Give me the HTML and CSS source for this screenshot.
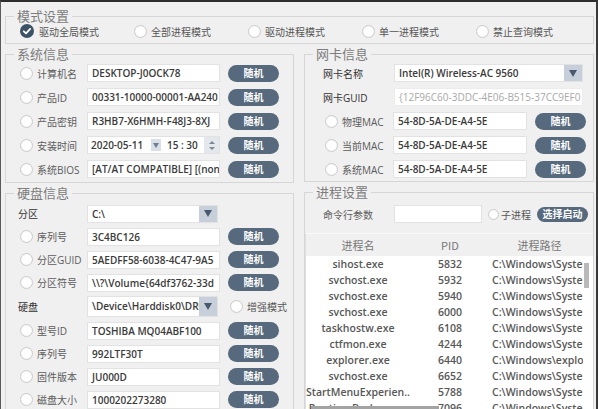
FILE: index.html
```html
<!DOCTYPE html>
<html>
<head>
  <meta charset="UTF-8">
  <title>模式设置</title>
  <link rel="stylesheet" href="styles.css">
</head>
<body>
  <div class="win">
    <fieldset class="group mode">
      <legend>模式设置</legend>
      <div class="mode-row">
        <div class="opt">
          <svg class="check" width="14" height="14" viewBox="0 0 14 14"><circle cx="7" cy="7" r="7" fill="#3e5266"/><path d="M3.8 7.3 L6 9.4 L10.2 4.9" fill="none" stroke="#fff" stroke-width="1.8" stroke-linecap="round" stroke-linejoin="round"/></svg>
          驱动全局模式
        </div>
        <div class="opt"><span class="radio"></span>全部进程模式</div>
        <div class="opt"><span class="radio"></span>驱动进程模式</div>
        <div class="opt"><span class="radio"></span>单一进程模式</div>
        <div class="opt"><span class="radio"></span>禁止查询模式</div>
      </div>
    </fieldset>

    <div class="cols">
      <div class="col">
        <fieldset class="group sys">
          <legend>系统信息</legend>
          <div class="row">
            <span class="radio"></span><span class="lbl">计算机名</span>
            <div class="field">DESKTOP-J0OCK78</div><div class="btn">随机</div>
          </div>
          <div class="row">
            <span class="radio"></span><span class="lbl">产品ID</span>
            <div class="field">00331-10000-00001-AA240</div><div class="btn">随机</div>
          </div>
          <div class="row">
            <span class="radio"></span><span class="lbl">产品密钥</span>
            <div class="field">R3HB7-X6HMH-F48J3-8XJ</div><div class="btn">随机</div>
          </div>
          <div class="row">
            <span class="radio"></span><span class="lbl">安装时间</span>
            <div class="field datetime">
              <span class="date">2020-05-11</span>
              <span class="mini-arrow"><i></i></span>
              <span class="time">15 : 30</span>
              <span class="spin"><i class="up"></i><i class="down"></i></span>
            </div>
            <div class="btn">随机</div>
          </div>
          <div class="row">
            <span class="radio"></span><span class="lbl">系统BIOS</span>
            <div class="field">[AT/AT COMPATIBLE] [(non</div><div class="btn">随机</div>
          </div>
        </fieldset>

        <fieldset class="group disk">
          <legend>硬盘信息</legend>
          <div class="row plain">
            <span class="lbl wide strong">分区</span>
            <div class="select"><span class="val">C:\</span><span class="arrow"><i></i></span></div>
          </div>
          <div class="row">
            <span class="radio"></span><span class="lbl">序列号</span>
            <div class="field">3C4BC126</div><div class="btn">随机</div>
          </div>
          <div class="row">
            <span class="radio"></span><span class="lbl">分区GUID</span>
            <div class="field">5AEDFF58-6038-4C47-9A5</div><div class="btn">随机</div>
          </div>
          <div class="row">
            <span class="radio"></span><span class="lbl">分区符号</span>
            <div class="field">\\?\Volume{64df3762-33d</div><div class="btn">随机</div>
          </div>
          <div class="row plain tall">
            <span class="lbl wide strong">硬盘</span>
            <div class="select big"><span class="val">\Device\Harddisk0\DR0</span><span class="arrow"><i></i></span></div>
            <span class="radio extra"></span><span class="extra-lbl">增强模式</span>
          </div>
          <div class="row">
            <span class="radio"></span><span class="lbl">型号ID</span>
            <div class="field">TOSHIBA MQ04ABF100</div><div class="btn">随机</div>
          </div>
          <div class="row">
            <span class="radio"></span><span class="lbl">序列号</span>
            <div class="field">992LTF30T</div><div class="btn">随机</div>
          </div>
          <div class="row">
            <span class="radio"></span><span class="lbl">固件版本</span>
            <div class="field">JU000D</div><div class="btn">随机</div>
          </div>
          <div class="row">
            <span class="radio"></span><span class="lbl">磁盘大小</span>
            <div class="field">1000202273280</div><div class="btn">随机</div>
          </div>
        </fieldset>
      </div>

      <div class="col">
        <fieldset class="group nic">
          <legend>网卡信息</legend>
          <div class="row plain nic-row">
            <span class="lbl nic-lbl strong">网卡名称</span>
            <div class="select nic-sel"><span class="val">Intel(R) Wireless-AC 9560</span><span class="arrow"><i></i></span></div>
          </div>
          <div class="row plain nic-row">
            <span class="lbl nic-lbl strong">网卡GUID</span>
            <div class="field nic-sel readonly">{12F96C60-3DDC-4E06-B515-37CC9EF0</div>
          </div>
          <div class="row mac">
            <span class="radio"></span><span class="lbl">物理MAC</span>
            <div class="field">54-8D-5A-DE-A4-5E</div><div class="btn">随机</div>
          </div>
          <div class="row mac">
            <span class="radio"></span><span class="lbl">当前MAC</span>
            <div class="field">54-8D-5A-DE-A4-5E</div><div class="btn">随机</div>
          </div>
          <div class="row mac">
            <span class="radio"></span><span class="lbl">系统MAC</span>
            <div class="field">54-8D-5A-DE-A4-5E</div><div class="btn">随机</div>
          </div>
        </fieldset>

        <fieldset class="group proc">
          <legend>进程设置</legend>
          <div class="row plain cmd-row">
            <span class="lbl nic-lbl">命令行参数</span>
            <div class="field cmd"></div>
            <span class="radio small"></span><span class="sub-lbl">子进程</span>
            <div class="btn start">选择启动</div>
          </div>
          <div class="tbl">
            <div class="thead">
              <span>进程名</span><span>PID</span><span>进程路径</span>
            </div>
            <div class="tbody">
              <div class="rows">
                <div class="tr"><span>sihost.exe</span><span>5832</span><span>C:\Windows\System32\sihost.exe</span></div>
                <div class="tr"><span>svchost.exe</span><span>5932</span><span>C:\Windows\System32\svchost.exe</span></div>
                <div class="tr"><span>svchost.exe</span><span>5940</span><span>C:\Windows\System32\svchost.exe</span></div>
                <div class="tr"><span>svchost.exe</span><span>6000</span><span>C:\Windows\System32\svchost.exe</span></div>
                <div class="tr"><span>taskhostw.exe</span><span>6108</span><span>C:\Windows\System32\taskhostw.exe</span></div>
                <div class="tr"><span>ctfmon.exe</span><span>4244</span><span>C:\Windows\System32\ctfmon.exe</span></div>
                <div class="tr"><span>explorer.exe</span><span>6440</span><span>C:\Windows\explorer.exe</span></div>
                <div class="tr"><span>svchost.exe</span><span>6652</span><span>C:\Windows\System32\svchost.exe</span></div>
                <div class="tr"><span>StartMenuExperien...</span><span>5788</span><span>C:\Windows\SystemApps\StartMenu.exe</span></div>
                <div class="tr"><span>RuntimeBroker.exe</span><span>7096</span><span>C:\Windows\System32\RuntimeBroker.exe</span></div>
              </div>
              <div class="vscroll"><div class="thumb"></div></div>
            </div>
            <div class="hscroll"></div>
          </div>
        </fieldset>
      </div>
    </div>
  </div>
</body>
</html>
```

FILE: styles.css
```css
* {
  box-sizing: border-box;
}
body {
  margin: 0;
  background: #2d2d2d;
  font-family: "Open Sans", "Noto Sans CJK SC", sans-serif;
  font-size: 10px;
  color: #5a5a5a;
}
.win {
  width: 598px;
  height: 409px;
  overflow: hidden;
  background: #f0f0f0;
  border-top: 2px solid #2e2e2e;
  border-left: 1px solid #5a5a5a;
  border-right: 2px solid #3a3a3a;
  padding: 7px 2px 0 4px;
}

/* group boxes */
.group {
  margin: 0;
  padding: 0;
  border: 1px solid #d6d6d6;
  min-width: 0;
}
.group legend {
  margin-left: 8px;
  padding: 0 3px;
  font-family: "Noto Sans CJK SC", sans-serif;
  font-size: 13px;
  line-height: 14px;
  color: #7c7c7c;
}
.mode {
  padding-bottom: 4px;
}
.mode-row {
  display: grid;
  grid-template-columns: repeat(5, 114px);
  height: 16px;
  padding-left: 14px;
  align-items: center;
}
.opt {
  display: flex;
  align-items: center;
  color: #555;
}
.opt .check {
  margin-right: 5px;
}
.opt .radio {
  margin-right: 4px;
}

.cols {
  display: grid;
  grid-template-columns: 289px 290px;
  column-gap: 10px;
  margin-top: 3px;
}
.col {
  display: flex;
  flex-direction: column;
  gap: 3px;
}
.sys {
  padding-bottom: 1px;
}
.disk,
.proc {
  padding-top: 2px;
}

/* rows */
.row {
  display: flex;
  align-items: center;
  height: 24px;
  padding-left: 14px;
}
.disk .row {
  height: 23px;
}
.disk .row.tall {
  height: 25px;
}
.row.plain {
  padding-left: 12px;
}
.radio {
  flex: none;
  width: 13px;
  height: 13px;
  border-radius: 50%;
  background: #fff;
  border: 1px solid #cbcbcb;
  box-shadow: inset 0 0 2px rgba(0, 0, 0, 0.08);
  margin-right: 4px;
}
.radio.small {
  width: 11px;
  height: 11px;
  margin-left: 6px;
  margin-right: 2px;
}
.lbl {
  flex: none;
  width: 50px;
  white-space: nowrap;
  color: #5c5c5c;
}
.lbl.wide {
  width: 69px;
}
.lbl.strong {
  color: #333;
}
.field {
  flex: none;
  width: 133px;
  height: 18px;
  line-height: 16px;
  padding-left: 4px;
  background: #fff;
  border: 1px solid #e2e2e2;
  color: #3a3a3a;
  font-weight: 600;
  white-space: nowrap;
  overflow: hidden;
}
.btn {
  flex: none;
  width: 51px;
  height: 17px;
  margin-left: 8px;
  border-radius: 9px;
  background: #56697d;
  color: #fff;
  font-weight: 700;
  font-size: 10px;
  line-height: 17px;
  text-align: center;
}

/* date / time */
.datetime {
  display: flex;
  align-items: center;
  padding-left: 3px;
}
.date {
  width: 60px;
}
.mini-arrow {
  width: 10px;
  height: 12px;
  background: #d9dfe6;
  display: flex;
  align-items: center;
  justify-content: center;
}
.mini-arrow i {
  border-left: 3px solid transparent;
  border-right: 3px solid transparent;
  border-top: 5px solid #6d7e91;
}
.time {
  width: 37px;
  padding-left: 6px;
}
.spin {
  width: 15px;
  height: 16px;
  margin-left: auto;
  background: #e4e8ec;
  display: flex;
  flex-direction: column;
  align-items: center;
  justify-content: space-around;
  padding: 2px 0;
}
.spin i {
  border-left: 3px solid transparent;
  border-right: 3px solid transparent;
}
.spin .up {
  border-bottom: 3px solid #7a8797;
}
.spin .down {
  border-top: 3px solid #7a8797;
}

/* selects */
.select {
  flex: none;
  display: flex;
  width: 131px;
  height: 18px;
  background: #fff;
  border: 1px solid #e2e2e2;
  color: #3a3a3a;
  font-weight: 600;
}
.select.big {
  height: 21px;
}
.select .val {
  flex: 1;
  padding-left: 4px;
  line-height: 16px;
  white-space: nowrap;
  overflow: hidden;
}
.select.big .val {
  line-height: 19px;
}
.select .arrow {
  flex: none;
  width: 18px;
  background: #c7d0da;
  display: flex;
  align-items: center;
  justify-content: center;
}
.select .arrow i {
  border-left: 4px solid transparent;
  border-right: 4px solid transparent;
  border-top: 7px solid #48596d;
}
.radio.extra {
  margin-left: 12px;
}
.extra-lbl {
  white-space: nowrap;
  color: #555;
}

/* nic */
.nic .row.plain {
  padding-left: 18px;
}
.lbl.nic-lbl {
  width: 71px;
}
.select.nic-sel,
.field.nic-sel {
  width: 189px;
}
.field.readonly {
  font-weight: 400;
  color: #a8a8a8;
  border-color: #ececec;
}
.row.mac {
  padding-left: 20px;
}
.row.mac .lbl {
  width: 51px;
}
.row.mac .field {
  width: 134px;
}

/* process */
.proc .row.plain {
  padding-left: 18px;
  height: 26px;
}
.field.cmd {
  width: 88px;
  height: 18px;
}
.sub-lbl {
  width: 30px;
  color: #555;
}
.btn.start {
  margin-left: 6px;
  height: 15px;
  line-height: 15px;
}
.tbl {
  position: relative;
  margin-top: 6px;
  border-left: 1px solid #e0e0e0;
  border-top: 1px solid #fafafa;
}
.thead,
.tr {
  display: grid;
  grid-template-columns: 104px 80px 1fr;
  white-space: nowrap;
}
.thead {
  height: 22px;
  align-items: center;
  font-family: "Noto Sans CJK SC", "Open Sans", sans-serif;
  font-size: 11px;
  color: #777;
  text-align: center;
}
.thead span:last-child {
  padding-right: 4px;
}
.tbody {
  display: flex;
  background: #fff;
}
.rows {
  width: 278px;
  overflow: hidden;
}
.tr {
  height: 16px;
  line-height: 16px;
  font-size: 10.5px;
  font-weight: 600;
  color: #575757;
}
.tr span {
  overflow: hidden;
}
.tr span:nth-child(1),
.tr span:nth-child(2) {
  text-align: center;
}
.tr span:nth-child(3) {
  padding-left: 2px;
}
.vscroll {
  flex: none;
  width: 10px;
  padding-left: 1px;
}
.vscroll .thumb {
  width: 5px;
  height: 25px;
  margin-top: 7px;
  background: #b9b9b9;
}
.hscroll {
  position: absolute;
  left: 5px;
  top: 172px;
  width: 128px;
  height: 5px;
  background: #a3a3a3;
}
```
